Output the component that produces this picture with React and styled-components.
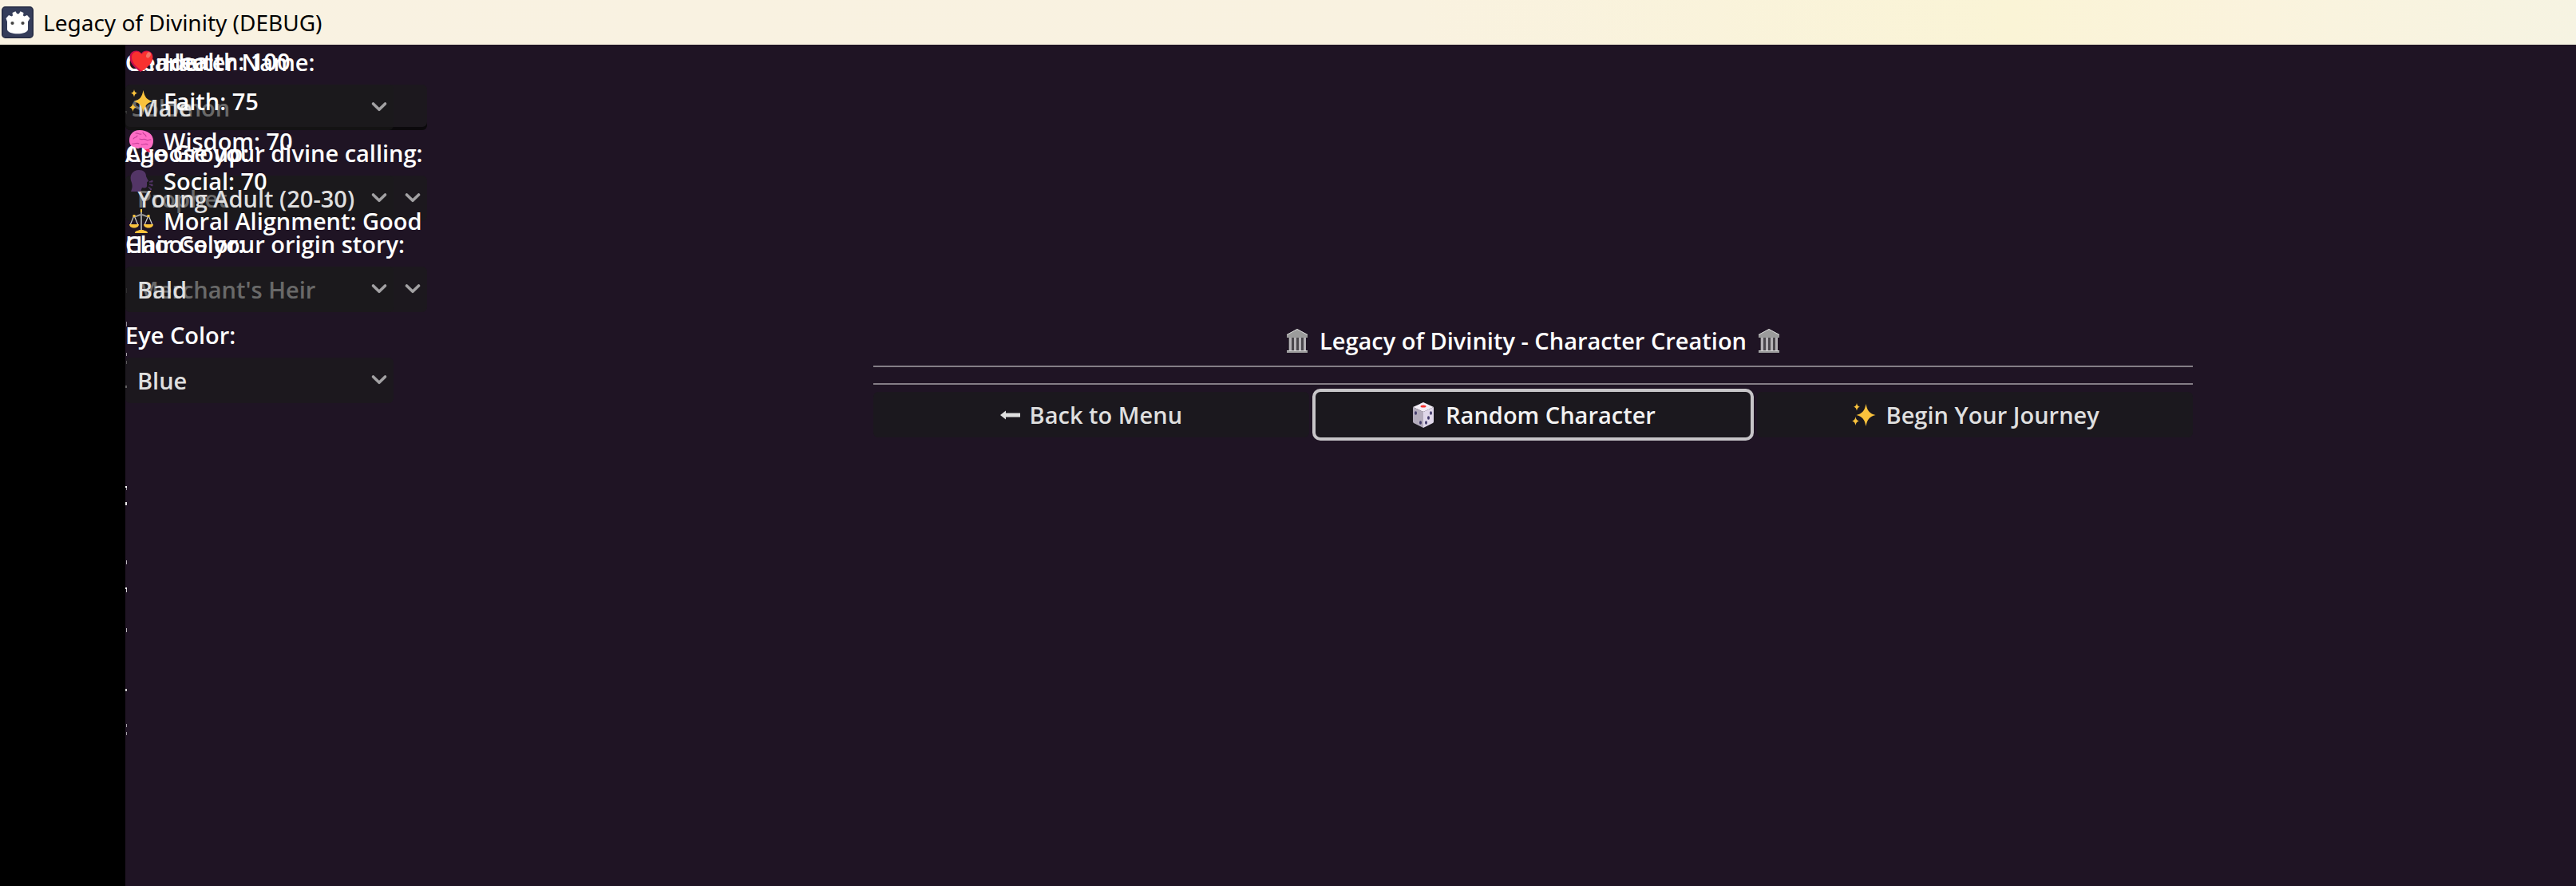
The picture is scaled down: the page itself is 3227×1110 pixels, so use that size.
import React from "react";
import styled, { createGlobalStyle } from "styled-components";

const GlobalStyle = createGlobalStyle`
  * { box-sizing: border-box; }
  body { margin: 0; background: #1f1424; }
`;

const Window = styled.div`
  min-height: 100vh;
  display: flex;
  flex-direction: column;
  font-family: "Open Sans", "Noto Sans", sans-serif;
  font-size: 29px;
  font-weight: 600;
  color: #fff;
`;

const TitleBar = styled.header`
  display: flex;
  align-items: center;
  gap: 12px;
  height: 56px;
  padding-left: 2px;
  background: linear-gradient(90deg, #f9f2e2 0%, #f9f2e0 55%, #faf4d6 78%, #faf3dd 88%, #f6f3e2 100%);
  color: #000;
  font-family: "Noto Sans", "Open Sans", sans-serif;
  font-size: 28px;
  font-weight: 400;
`;

const Viewport = styled.div`
  flex: 1;
  display: flex;
`;

const Letterbox = styled.div`
  flex: none;
  width: 157px;
  background: #000;
`;

const Stage = styled.main`
  flex: 1;
  display: grid;
  grid-template-columns: 937fr 1653fr 480fr;
  align-items: start;
  background: #1f1424;
`;

const Panels = styled.div`
  display: grid;
  justify-items: start;
`;

const Column = styled.div`
  grid-area: 1 / 1;
  display: flex;
  flex-direction: column;
  gap: 7px;
  width: ${(p) => p.$width}px;
`;

const Label = styled.label`
  line-height: 43px;
  white-space: nowrap;
`;

const TextBox = styled.input`
  height: 57px;
  padding: 0 8px;
  border: 0;
  border-radius: 6px;
  background: rgba(26, 26, 26, 0.6);
  box-shadow: inset 0 -4px 0 rgba(0, 0, 0, 0.6);
  font: inherit;
  color: #dfdfdf;
  outline: none;
`;

const SelectBox = styled.div`
  display: grid;
  align-items: center;
  height: 57px;
  border-radius: 6px;
  background: rgba(26, 26, 26, 0.6);
  > * { grid-area: 1 / 1; }
  svg { justify-self: end; margin-right: 7px; pointer-events: none; }
`;

const Select = styled.select`
  appearance: none;
  width: 100%;
  height: 57px;
  padding: 0 44px 0 15px;
  border: 0;
  background: transparent;
  font: inherit;
  color: #dfdfdf;
  outline: none;
`;

const Stats = styled.ul`
  grid-area: 1 / 1;
  display: flex;
  flex-direction: column;
  gap: 8px;
  margin: 0;
  padding: 0 0 0 4px;
  list-style: none;
`;

const Stat = styled.li`
  display: flex;
  align-items: center;
  gap: 12px;
  line-height: 42px;
  white-space: nowrap;
`;

const Creation = styled.section`
  display: flex;
  flex-direction: column;
  gap: 7px;
  padding-top: 350px;
`;

const Heading = styled.h1`
  display: flex;
  justify-content: center;
  align-items: center;
  gap: 12px;
  margin: 0;
  font: inherit;
  line-height: 42px;
`;

const Rule = styled.hr`
  width: 100%;
  height: 2px;
  margin: 0;
  border: 0;
  background: #847e86;
`;

const Rules = styled.div`
  display: flex;
  flex-direction: column;
  gap: 20px;
  padding: 3px 0 2px;
`;

const Actions = styled.div`
  display: grid;
  grid-template-columns: repeat(3, 1fr);
  gap: 8px;
`;

const Action = styled.button`
  display: flex;
  justify-content: center;
  align-items: center;
  gap: 12px;
  height: 57px;
  border: 0;
  border-radius: 6px;
  background: #1b181e;
  font: inherit;
  color: ${(p) => (p.$focused ? "#f2f2f2" : "#dfdfdf")};
  outline: ${(p) => (p.$focused ? "4px solid #c7c5c8" : "none")};
`;

const EdgeMarks = styled.svg`
  grid-area: 1 / 1;
  display: block;
`;

const Chevron = () => (
  <svg width="22" height="16" viewBox="0 0 22 16" fill="none" stroke="#a2a1a3" strokeWidth="3.6" strokeLinecap="round" strokeLinejoin="round">
    <path d="M3.500 3l7.500 7.300 7.500-7.300" />
  </svg>
);

const AppIcon = () => (
  <svg width="40" height="40" viewBox="0 0 40 40">
    <rect x="0.8" y="0.8" width="38.4" height="38.4" rx="4" fill="#353d5a" stroke="#252b43" strokeWidth="1.6" />
    <path fill="#fff" d="M7 29V19l-1.500-4 3.500-4 3.500 1.500 1.500-1-.5-3.500 4-1.800 1.700 3h2.600l1.700-3 4 1.800-.5 3.500 1.500 1 3.500-1.500 3.500 4L33 19v10c-1 7-25 7-26 0z" />
    <circle cx="13.500" cy="21" r="2.100" fill="#444" />
    <circle cx="26.500" cy="21" r="2.100" fill="#444" />
  </svg>
);

const Heart = () => (
  <svg width="32" height="32" viewBox="0 0 32 32">
    <path fill="#ca0b4a" d="M15 29C6 23 1.500 17 1.500 10.500 1.500 2 12 0 16 6c4-6 14.500-4 14.500 4.500C30.500 17 25 23 15 29z" />
    <path fill="#f8312f" d="M17 28C9 22.500 4 17 4 10.500 4 3 12.500 1.500 16.500 7c4-6 13.500-4 13.500 3.500C30 17 25 22.500 17 28z" />
    <ellipse cx="25" cy="8" rx="2.600" ry="3.800" fill="#f37366" transform="rotate(30 25 8)" />
  </svg>
);

const Sparkles = () => (
  <svg width="32" height="32" viewBox="0 0 32 32" fill="#f9c23c">
    <path d="M18.500 2c1.700 9 4.500 12 12 14-7.500 2-10.300 5-12 14-1.700-9-4.500-12-12-14 7.500-2 10.300-5 12-14z" />
    <path d="M7 1c.6 3 1.400 4 4 4.700C8.400 6.400 7.600 7.500 7 10.500 6.400 7.500 5.600 6.400 3 5.700 5.600 5 6.400 4 7 1z" />
    <path d="M5.500 18c.7 3.400 1.600 4.600 4.500 5.500-2.900.9-3.800 2-4.500 5.500-.7-3.500-1.600-4.600-4.500-5.500 2.900-.9 3.800-2.100 4.500-5.500z" />
  </svg>
);

const Brain = () => (
  <svg width="32" height="32" viewBox="0 0 32 32">
    <path fill="#f92f60" d="M19 24h7l1 6-4-1z" />
    <path fill="#ff6dc6" d="M1 15C1 8 5 2 14 2s17 5 17 13c0 7-3 11-9 11-3 0-3-2-6-2-4 1-6 1-9-1-4 0-6-4-6-8z" />
    <path fill="none" stroke="#c9409a" strokeWidth="1.100" strokeLinecap="round" d="M6 13c2-3 4-1 5-4M9 6c3-1 4 2 7 1M18 5c1 3 4 2 4 5M14 13c3 2 5-1 8 1s4-1 6 0M5 19c3 1 5-2 8 0M16 20c3 1 5-2 8 0" />
  </svg>
);

const Head = () => (
  <svg width="32" height="32" viewBox="0 0 32 32" fill="#533566">
    <path d="M3 29c2-5 2-7 1-11C0 9 5 2 13 2c6 0 9 3 9 8l3 6-2 1v5c0 2-2 3-6 2l-2 5z" />
    <path d="M26 17l4-2v2zM26 20h4v2zM25 23l4 3-1 1z" stroke="#533566" />
  </svg>
);

const Scales = () => (
  <svg width="32" height="32" viewBox="0 0 32 32">
    <path fill="none" stroke="#d3d3d3" strokeWidth="1.200" d="M7 9L2 21M7 9l5 12M25 9l-5 12M25 9l5 12" />
    <path fill="none" stroke="#9b9b9b" strokeWidth="2" d="M7 10c4 1 5-2 9-2s5 3 9 2M16 4v24" />
    <path fill="#f9c23c" d="M1 20h12c0 6-12 6-12 0zM19 20h12c0 6-12 6-12 0zM8 31c0-3 4-3 6-4h4c2 1 6 1 6 4zM15 1h2v4h-2zM5.500 8h3v3h-3zM23.500 8h3v3h-3z" />
  </svg>
);

const Temple = () => (
  <svg width="32" height="32" viewBox="0 0 32 32">
    <path fill="#4a474c" d="M5 12h22v16H5z" />
    <path fill="#9b9b9b" d="M3 8L16 1l13 7v4H3zM3 28h26v3H3z" />
    <path fill="#b4b1b5" d="M6 12h3v16H6zM12 12h3v16h-3zM18 12h3v16h-3zM24 12h3v16h-3z" />
    <path fill="none" stroke="#d3d3d3" d="M3 8.500L16 1.500l13 7M3 28.500h26" />
  </svg>
);

const Die = () => (
  <svg width="32" height="32" viewBox="0 0 32 32">
    <path fill="#f4eef8" d="M16 0l13 6-13 6L3 6z" />
    <path fill="#b4acbc" d="M3 6l13 6v20L4 26q-1-.5-1-2z" />
    <path fill="#e0d8ea" d="M29 6l-13 6v20l12-6q1-.5 1-2z" />
    <ellipse cx="16" cy="5" rx="3.500" ry="1.600" fill="#f8312f" />
    <g fill="#433b6b">
      <ellipse cx="6.500" cy="13.500" rx="1.500" ry="2.200" />
      <ellipse cx="12.500" cy="25.500" rx="1.500" ry="2.200" />
      <ellipse cx="25.500" cy="13.500" rx="1.500" ry="2.200" />
      <ellipse cx="22.500" cy="19.500" rx="1.500" ry="2.200" />
      <ellipse cx="19.500" cy="25.500" rx="1.500" ry="2.200" />
    </g>
  </svg>
);

const BackArrow = () => (
  <svg width="25" height="12" viewBox="0 0 25 12" fill="#dfdfdf">
    <path d="M0 6l7-5.500V3.500h18v5H7v3z" />
  </svg>
);

const Field = ({ id, label, value }) => (
  <>
    <Label htmlFor={id}>{label}</Label>
    <SelectBox>
      <Select id={id} defaultValue={value}>
        <option>{value}</option>
      </Select>
      <Chevron />
    </SelectBox>
  </>
);

const stats = [
  [Heart, "Health: 100"],
  [Sparkles, "Faith: 75"],
  [Brain, "Wisdom: 70"],
  [Head, "Social: 70"],
  [Scales, "Moral Alignment: Good"],
];

// Slivers that show at the stage's left edge: [x, y, width, height, opacity]
const marks = [
  [0, 83, 2, 2, 0.9],
  [1, 85, 1, 2, 0.5],
  [1, 305, 1, 6, 0.6],
  [1, 347, 1, 6, 0.5],
  [1, 386, 1, 4, 0.6],
  [1, 396, 1, 4, 0.7],
  [0, 427, 2, 3, 0.8],
  [0, 553, 2, 2, 1],
  [1, 555, 1, 3, 0.6],
  [0, 573, 2, 4, 0.9],
  [1, 646, 1, 5, 0.7],
  [0, 680, 2, 2, 1],
  [1, 682, 1, 4, 0.8],
  [1, 731, 1, 5, 0.7],
  [0, 807, 2, 3, 0.8],
  [1, 851, 1, 4, 0.6],
  [1, 861, 1, 4, 0.6],
];

export default function App() {
  return (
    <Window>
      <GlobalStyle />
      <TitleBar>
        <AppIcon />
        <span>Legacy of Divinity (DEBUG)</span>
      </TitleBar>
      <Viewport>
        <Letterbox />
        <Stage>
          <Panels>
            <EdgeMarks width="2" height="900" viewBox="0 0 2 900" fill="#fff">
              {marks.map(([x, y, w, h, o]) => (
                <rect key={y} x={x} y={y} width={w} height={h} opacity={o} />
              ))}
            </EdgeMarks>
            <Column $width={378}>
              <Label htmlFor="name">Character Name:</Label>
              <TextBox id="name" type="text" defaultValue="Solomon" />
              <Field id="calling" label="Choose your divine calling:" value="Prophet" />
              <Field id="origin" label="Choose your origin story:" value="Merchant's Heir" />
            </Column>
            <Column $width={336}>
              <Field id="gender" label="Gender:" value="Male" />
              <Field id="age" label="Age Group:" value="Young Adult (20-30)" />
              <Field id="hair" label="Hair Color:" value="Bald" />
              <Field id="eyes" label="Eye Color:" value="Blue" />
            </Column>
            <Stats>
              {stats.map(([Icon, text]) => (
                <Stat key={text}>
                  <Icon />
                  <span>{text}</span>
                </Stat>
              ))}
            </Stats>
          </Panels>
          <Creation>
            <Heading>
              <Temple />
              <span>Legacy of Divinity - Character Creation</span>
              <Temple />
            </Heading>
            <Rules>
              <Rule />
              <Rule />
            </Rules>
            <Actions>
              <Action type="button">
                <BackArrow />
                <span>Back to Menu</span>
              </Action>
              <Action type="button" $focused>
                <Die />
                <span>Random Character</span>
              </Action>
              <Action type="button">
                <Sparkles />
                <span>Begin Your Journey</span>
              </Action>
            </Actions>
          </Creation>
        </Stage>
      </Viewport>
    </Window>
  );
}
